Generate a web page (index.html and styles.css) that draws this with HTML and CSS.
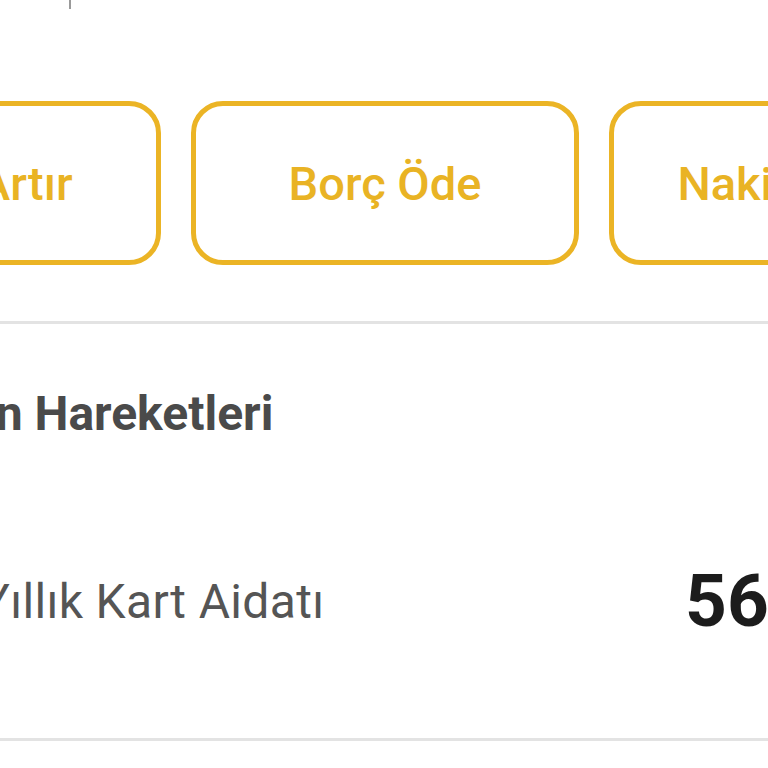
FILE: index.html
```html
<!DOCTYPE html>
<html lang="tr">
<head>
<meta charset="utf-8">
<title>Kart</title>
<link rel="stylesheet" href="styles.css">
</head>
<body>
<div class="page">
  <div class="topbar"><span class="caret"></span></div>
  <div class="actions">
    <button class="action">Limit Artır</button>
    <button class="action">Borç Öde</button>
    <button class="action">Nakit Avans</button>
  </div>
  <div class="divider"></div>
  <section class="list">
    <h2 class="list-title">Son Hareketleri</h2>
    <div class="row">
      <span class="row-label">Yıllık Kart Aidatı</span>
      <span class="row-value">56,00 TL</span>
    </div>
  </section>
  <div class="divider"></div>
</div>
</body>
</html>
```

FILE: styles.css
```css
html, body {
  margin: 0;
  padding: 0;
  background: #ffffff;
}
body {
  width: 768px;
  height: 768px;
  overflow: hidden;
  font-family: Roboto, "Noto Sans", sans-serif;
}
.page {
  display: flex;
  flex-direction: column;
}
.topbar {
  height: 9px;
  display: flex;
}
.caret {
  margin-left: 69px;
  width: 2px;
  height: 9px;
  background: #9a9a9a;
}
.actions {
  display: flex;
  gap: 30px;
  margin-top: 92px;
  margin-left: -227px;
}
.action {
  flex: 0 0 388px;
  height: 164px;
  box-sizing: border-box;
  border: 5px solid #ebb425;
  border-radius: 32px;
  background: #ffffff;
  color: #e9b324;
  font-family: Roboto, sans-serif;
  font-size: 47px;
  font-weight: 500;
  display: flex;
  align-items: center;
  justify-content: center;
  padding: 0;
  white-space: nowrap;
}
.divider {
  height: 3px;
  background: #e3e3e3;
  margin-top: 56px;
}
.list {
  margin-left: -61px;
  display: flex;
  flex-direction: column;
}
.list-title {
  margin: 66px 0 0 0;
  font-size: 48px;
  line-height: 48px;
  font-weight: 700;
  color: #4a4a4a;
}
.row {
  display: flex;
  align-items: center;
  padding: 127px 0 100px 42px;
}
.row-label {
  flex: 0 0 704px;
  font-size: 48px;
  line-height: 48px;
  letter-spacing: 0.35px;
  color: #555555;
  white-space: nowrap;
}
.row-value {
  font-size: 73px;
  line-height: 73px;
  font-weight: 700;
  color: #1c1c1c;
  white-space: nowrap;
}
.list + .divider {
  margin-top: 0;
}
```
